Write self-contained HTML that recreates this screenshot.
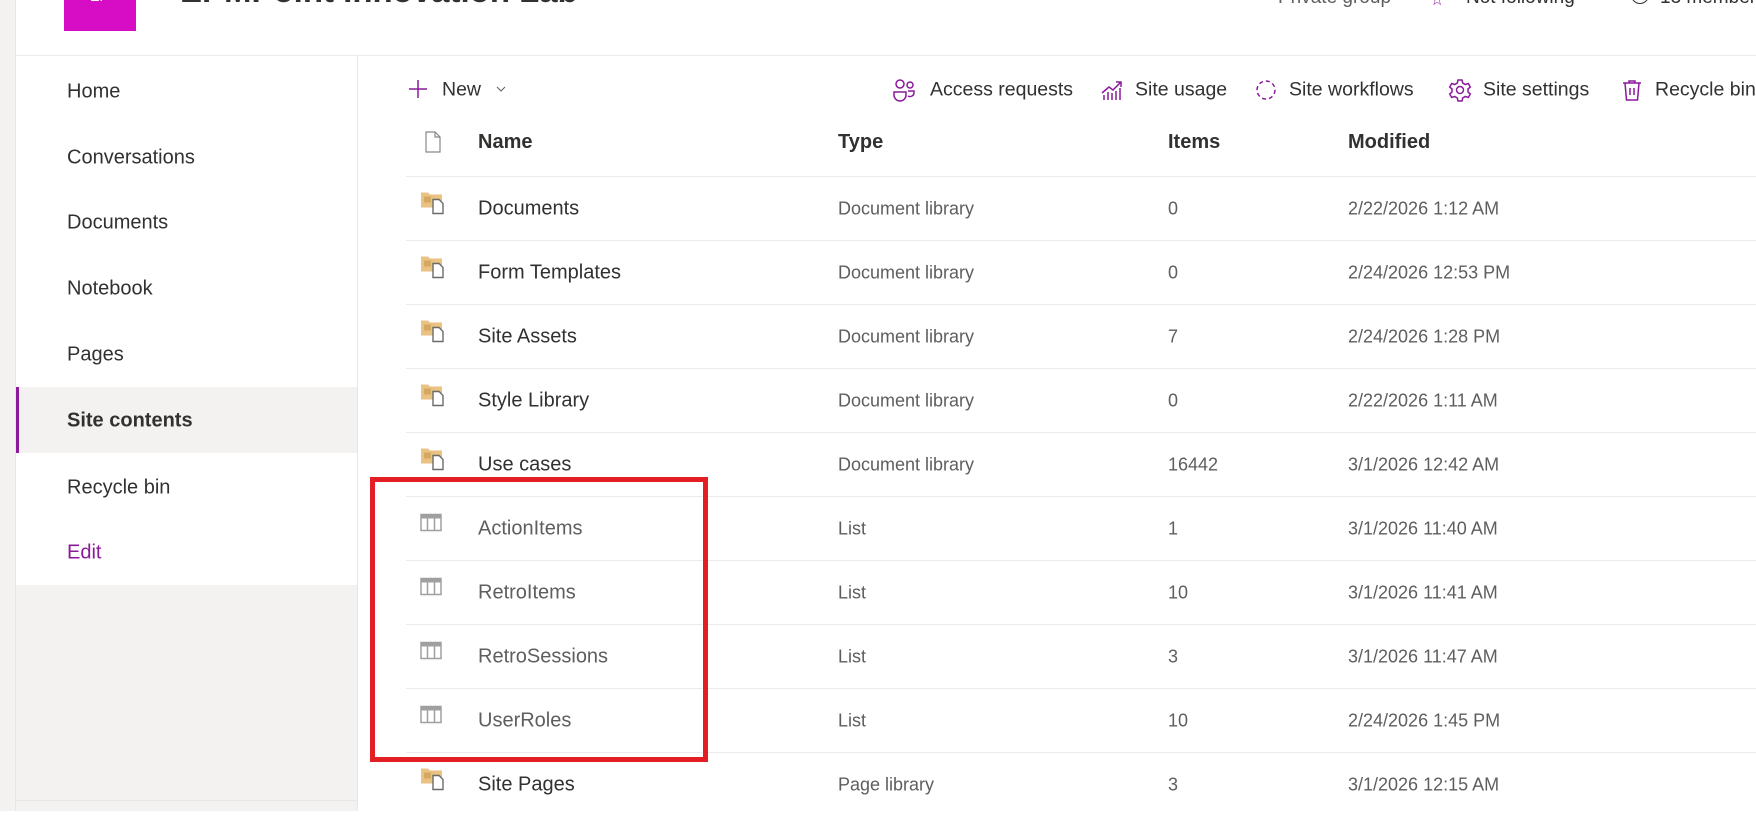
<!DOCTYPE html>
<html><head><meta charset="utf-8"><style>
*{margin:0;padding:0;box-sizing:border-box}
body{width:1756px;height:811px;overflow:hidden;background:#fff;font-family:"Liberation Sans",sans-serif;position:relative;color:#323130}
.a{position:absolute;white-space:nowrap}
.nav{position:absolute;left:67px;font-size:20px;color:#323130;transform:translateY(-50%)}
.cmd{position:absolute;top:90px;transform:translateY(-50%);font-size:19.5px;color:#323130}
.ico{position:absolute;top:78px}
.row{position:absolute;left:406px;right:0;height:64px;border-top:1px solid #edebe9}
.c{position:absolute;top:50%;transform:translateY(-50%);white-space:nowrap}
.nm{left:72px;font-size:20px;color:#323130}
.nm.l{color:#605e5c}
.ty{left:432px;font-size:18px;color:#605e5c}
.it{left:762px;font-size:18px;color:#605e5c}
.md{left:942px;font-size:18px;color:#605e5c}
.ic{left:14px}
</style></head><body>
<div class="a" style="left:0;top:0;width:16px;height:811px;background:#f3f2f1;border-right:1px solid #e8e6e4"></div>
<div class="a" style="left:64px;top:0;width:72px;height:31px;background:#d60dc4"></div>
<div class="a" style="left:90px;top:-12px;color:#fff;font-size:14px">EP</div>
<div class="a" style="left:180px;top:-28px;font-size:33px;font-weight:bold;color:#323130">EPMPoint Innovation Lab</div>
<div class="a" style="left:1278px;top:-13px;font-size:19px;color:#605e5c">Private group</div>
<div class="a" style="left:1430px;top:-10px;font-size:16px;color:#8a1a9a">☆</div>
<div class="a" style="left:1466px;top:-13px;font-size:19px;color:#323130">Not following</div>
<div class="a" style="left:1631px;top:-14px;width:18px;height:18px;border:1.5px solid #323130;border-radius:50%"></div>
<div class="a" style="left:1660px;top:-13px;font-size:19px;color:#323130">13 members</div>
<div class="a" style="left:16px;top:55px;width:1740px;height:1px;background:#edebe9"></div>
<div class="a" style="left:16px;top:56px;width:342px;height:755px;background:#f3f2f1;border-right:1px solid #e8e6e4"></div>
<div class="a" style="left:16px;top:56px;width:341px;height:529px;background:#fff"></div>
<div class="a" style="left:16px;top:387px;width:341px;height:66px;background:#f3f2f1"></div>
<div class="a" style="left:16px;top:387px;width:3px;height:66px;background:#8a1a9a"></div>
<div class="a" style="left:16px;top:800px;width:341px;height:1px;background:#e8e6e4"></div>
<div class="nav" style="top:92px">Home</div>
<div class="nav" style="top:158px">Conversations</div>
<div class="nav" style="top:223px">Documents</div>
<div class="nav" style="top:289px">Notebook</div>
<div class="nav" style="top:355px">Pages</div>
<div class="nav" style="top:421px;font-weight:bold">Site contents</div>
<div class="nav" style="top:488px">Recycle bin</div>
<div class="nav" style="top:553px;color:#8a1a9a">Edit</div>

<svg class="ico" style="left:407px" width="22" height="22" viewBox="0 0 22 22"><path d="M11 2v18M2 11h18" stroke="#8a1a9a" stroke-width="1.5"/></svg>
<div class="cmd" style="left:442px">New</div>
<svg class="ico" style="left:496px;top:85px" width="10" height="8"><path d="M1 2l4 4 4-4" stroke="#605e5c" fill="none"/></svg>
<svg class="ico" style="left:892px" width="24" height="24" viewBox="0 0 24 24" fill="none" stroke="#8a1a9a" stroke-width="1.5"><circle cx="8" cy="6" r="4"/><circle cx="18" cy="7" r="3"/><path d="M2 14h12v3a6 6 0 0 1-12 0z"/><path d="M16 13h6v2a4 4 0 0 1-6 3"/></svg>
<div class="cmd" style="left:930px">Access requests</div>
<svg class="ico" style="left:1100px" width="24" height="24" viewBox="0 0 24 24" fill="none" stroke="#8a1a9a" stroke-width="1.5"><path d="M2 15l7-6 4 3 8-8M16 4h5v5"/><path d="M4 22v-5M8 22v-8M12 22v-7M16 22v-9M20 22v-12"/></svg>
<div class="cmd" style="left:1135px">Site usage</div>
<svg class="ico" style="left:1254px" width="24" height="24" viewBox="0 0 24 24" fill="none" stroke="#8a1a9a" stroke-width="1.5" stroke-dasharray="4 3"><circle cx="12" cy="12" r="9"/></svg>
<div class="cmd" style="left:1289px">Site workflows</div>
<svg class="ico" style="left:1448px" width="24" height="24" viewBox="0 0 24 24" fill="none" stroke="#8a1a9a" stroke-width="1.5"><circle cx="12" cy="12" r="3.5"/><path d="M10 2h4l.7 3 2.6 1.5 3-1 2 3.5-2.3 2v3l2.3 2-2 3.5-3-1-2.6 1.5-.7 3h-4l-.7-3-2.6-1.5-3 1-2-3.5 2.3-2v-3l-2.3-2 2-3.5 3 1L9.3 5z"/></svg>
<div class="cmd" style="left:1483px">Site settings</div>
<svg class="ico" style="left:1620px" width="24" height="24" viewBox="0 0 24 24" fill="none" stroke="#8a1a9a" stroke-width="1.5"><path d="M3 5h18M9 5V3h6v2M5 5l1.5 17h11L19 5M10 10v7M14 10v7"/></svg>
<div class="cmd" style="left:1655px">Recycle bin</div>

<svg class="a" style="left:424px;top:131px" width="18" height="22" viewBox="0 0 18 22" fill="none" stroke="#8a8886" stroke-width="1.2"><path d="M2 1h9l5 5v15H2z M11 1v5h5"/></svg>
<div class="a" style="left:478px;top:131px;font-size:20px;font-weight:bold">Name</div>
<div class="a" style="left:838px;top:131px;font-size:20px;font-weight:bold">Type</div>
<div class="a" style="left:1168px;top:131px;font-size:20px;font-weight:bold">Items</div>
<div class="a" style="left:1348px;top:131px;font-size:20px;font-weight:bold">Modified</div>

<div id="rows"></div>
<script>
var lib='<svg width="28" height="24" viewBox="0 0 28 24"><path d="M1 2h7l2 2h12v13H1z" fill="#eac282"/><rect x="4" y="6" width="7" height="6" fill="#d4a860"/><path d="M13 9h6l4 4v10H13z" fill="#fff" stroke="#6b6b6b" stroke-width="1.4"/></svg>';
var lst='<svg width="22" height="18" viewBox="0 0 22 18"><rect x="1" y="1" width="20" height="16" fill="#fff" stroke="#a0a0a0" stroke-width="1.5"/><rect x="1" y="1" width="20" height="4" fill="#a0a0a0"/><path d="M7.5 5v12M14.5 5v12" stroke="#a0a0a0" stroke-width="1.5"/></svg>';
var d=[["Documents","Document library","0","2/22/2026 1:12 AM",0],["Form Templates","Document library","0","2/24/2026 12:53 PM",0],["Site Assets","Document library","7","2/24/2026 1:28 PM",0],["Style Library","Document library","0","2/22/2026 1:11 AM",0],["Use cases","Document library","16442","3/1/2026 12:42 AM",0],["ActionItems","List","1","3/1/2026 11:40 AM",1],["RetroItems","List","10","3/1/2026 11:41 AM",1],["RetroSessions","List","3","3/1/2026 11:47 AM",1],["UserRoles","List","10","2/24/2026 1:45 PM",1],["Site Pages","Page library","3","3/1/2026 12:15 AM",0]];
var h='';d.forEach(function(r,i){h+='<div class="row" style="top:'+(176+64*i)+'px"><div class="c ic" style="margin-top:-4px">'+(r[4]?lst:lib)+'</div><div class="c nm'+(r[4]?' l':'')+'">'+r[0]+'</div><div class="c ty">'+r[1]+'</div><div class="c it">'+r[2]+'</div><div class="c md">'+r[3]+'</div></div>'});
document.getElementById('rows').innerHTML=h;
</script>
<div class="a" style="left:370px;top:477px;width:338px;height:285px;border:5px solid #e31e24"></div>
</body></html>
